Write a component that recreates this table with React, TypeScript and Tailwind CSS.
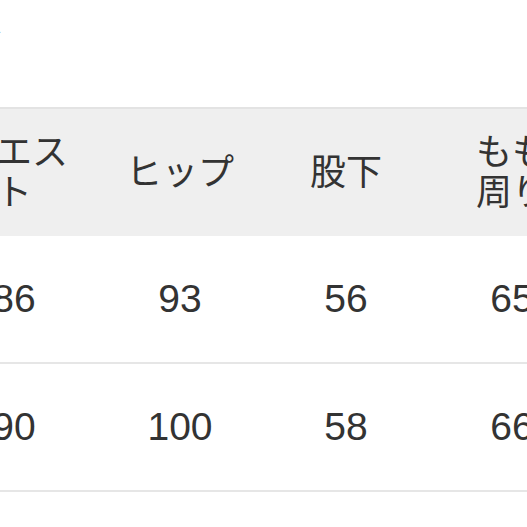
import React from "react";

const headers = ["ウエス\nト", "ヒップ", "股下", "もも\n周り"];
const rows = [
  ["86", "93", "56", "65"],
  ["90", "100", "58", "66"],
];

export default function App() {
  return (
    <div
      className="w-[527px] h-[527px] bg-white overflow-hidden text-[#333333]"
      style={{ fontFamily: '"Liberation Sans", "Noto Sans CJK JP", sans-serif' }}
    >
      <div className="h-[107px] flex items-center">
        <div className="ml-[-105px] mt-[-14px] text-[36px] leading-[40px] text-[#777777]">サイズ</div>
      </div>
      <div className="ml-[-69px] w-[664px] flex items-center h-[129px] bg-[#efefef] border-t-2 border-[#e3e3e3]">
        {headers.map((h, i) => (
          <div key={i} className="w-[166px] text-center text-[36px] leading-[40px] whitespace-pre-line">
            {h}
          </div>
        ))}
      </div>
      {rows.map((r, ri) => (
        <div
          key={ri}
          className="ml-[-69px] w-[664px] flex items-center h-[128px] border-b-2 border-[#e6e6e6]"
        >
          {r.map((c, ci) => (
            <div key={ci} className="w-[166px] text-center text-[39px] leading-[40px]">
              {c}
            </div>
          ))}
        </div>
      ))}
    </div>
  );
}
